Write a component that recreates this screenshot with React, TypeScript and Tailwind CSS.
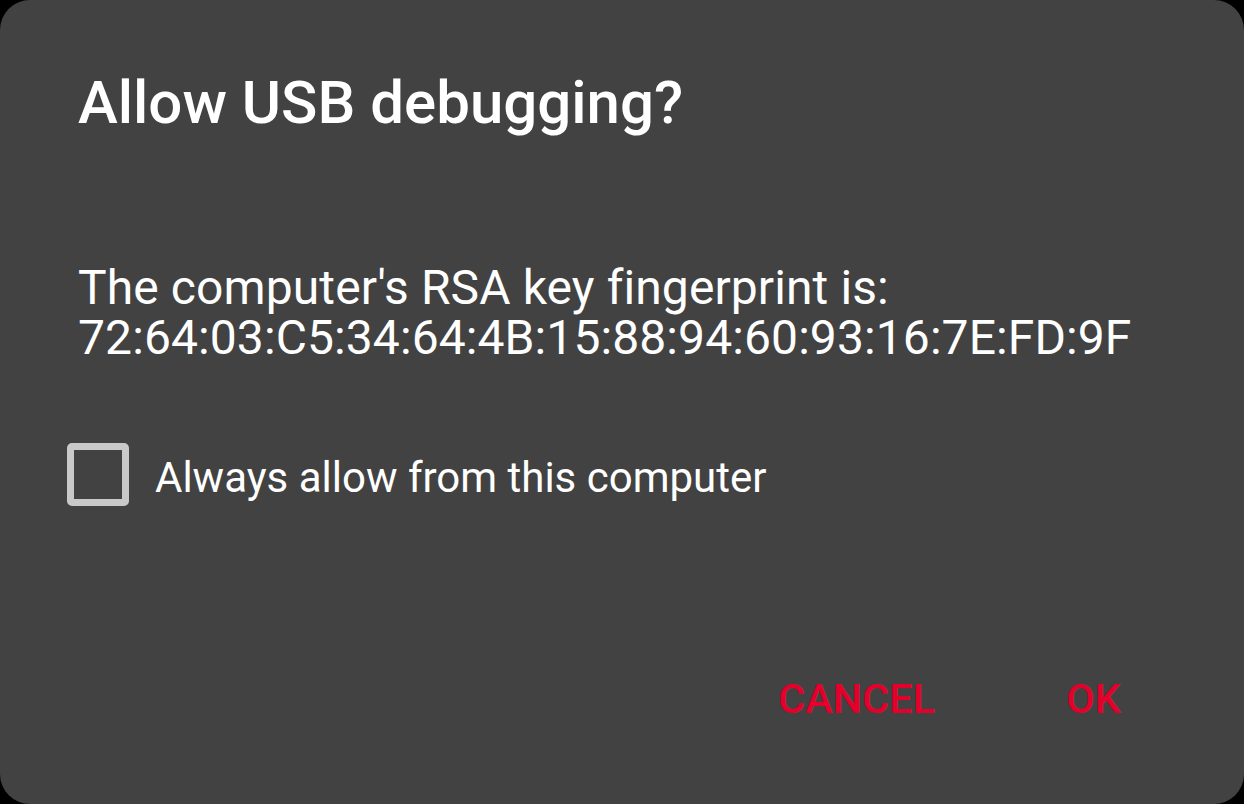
const App = () => {
  return (
    <div className="w-[1244px] h-[804px] bg-black" style={{ fontFamily: 'Roboto, "Noto Sans", sans-serif' }}>
      <div className="w-full h-full rounded-[30px] bg-[#424242] flex flex-col text-white">
        <h1 className="pl-[78px] pt-[69px] text-[60px] leading-[68px] font-medium">Allow USB debugging?</h1>

        <div className="pl-[78px] mt-[124px] text-[48px] leading-[50px] tracking-[0.1px]">
          <p className="pt-[2px]">The computer's RSA key fingerprint is:</p>
          <p>72:64:03:C5:34:64:4B:15:88:94:60:93:16:7E:FD:9F</p>
        </div>

        <label className="ml-[67px] mt-[80px] flex items-center gap-[26px]">
          <span className="w-[62px] h-[63px] rounded-[5px] border-[7px] border-[#c9c9c9] shrink-0" />
          <span className="pt-[6px] text-[42px] leading-[50px]">Always allow from this computer</span>
        </label>

        <div className="mt-auto mb-[81px] flex justify-end pr-[123px] gap-[131px] text-[41.5px] leading-[49px] font-medium text-[#e4002b]">
          <button>CANCEL</button>
          <button>OK</button>
        </div>
      </div>
    </div>
  );
};

export default App;
